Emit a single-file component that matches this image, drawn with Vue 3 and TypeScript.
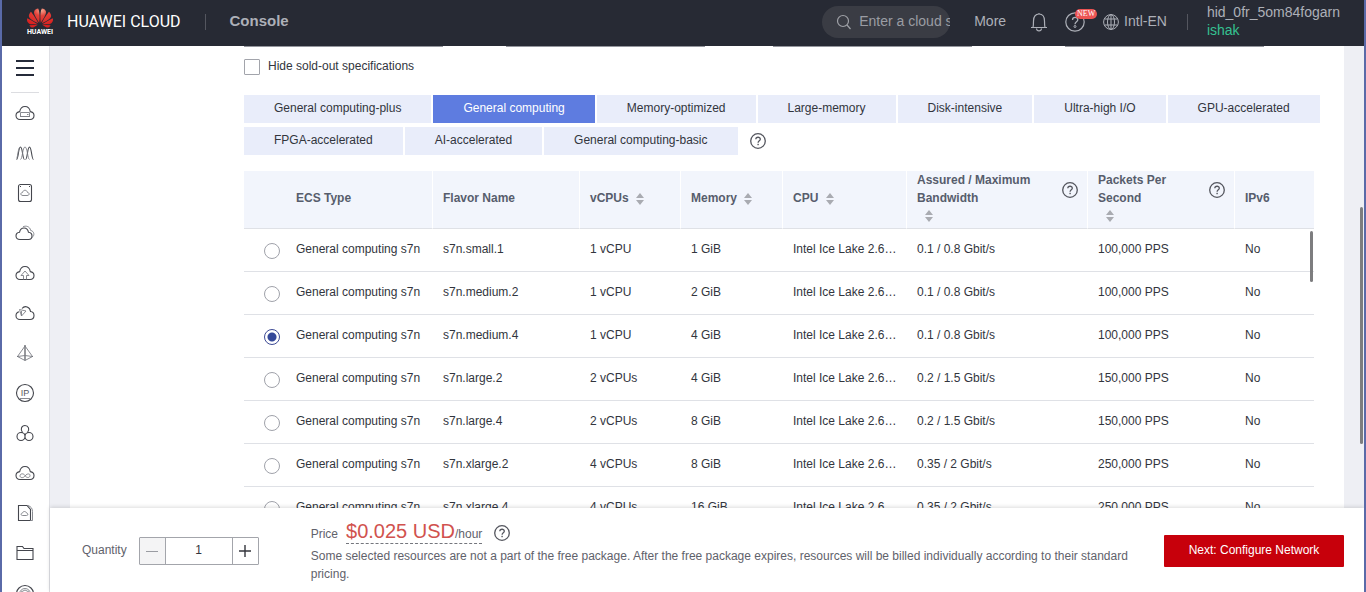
<script setup lang="ts">
import { ref } from 'vue'

interface Flavor {
  type: string
  name: string
  vcpus: string
  memory: string
  cpu: string
  bandwidth: string
  pps: string
  ipv6: string
}

interface Column {
  label: string
  width: number
  sortable?: boolean
  help?: boolean
}

const flavor = (name: string, vcpus: string, memory: string, bandwidth: string, pps: string): Flavor => ({
  type: 'General computing s7n',
  name,
  vcpus,
  memory,
  cpu: 'Intel Ice Lake 2.6GHz',
  bandwidth,
  pps,
  ipv6: 'No',
})

const tabs: string[] = [
  'General computing-plus',
  'General computing',
  'Memory-optimized',
  'Large-memory',
  'Disk-intensive',
  'Ultra-high I/O',
  'GPU-accelerated',
  'FPGA-accelerated',
  'AI-accelerated',
  'General computing-basic',
]

const columns: Column[] = [
  { label: 'ECS Type', width: 147 },
  { label: 'Flavor Name', width: 147 },
  { label: 'vCPUs', width: 101, sortable: true },
  { label: 'Memory', width: 102, sortable: true },
  { label: 'CPU', width: 124, sortable: true },
  { label: 'Assured / Maximum Bandwidth', width: 181, sortable: true, help: true },
  { label: 'Packets Per Second', width: 147, sortable: true, help: true },
  { label: 'IPv6', width: 79 },
]

const flavors: Flavor[] = [
  flavor('s7n.small.1', '1 vCPU', '1 GiB', '0.1 / 0.8 Gbit/s', '100,000 PPS'),
  flavor('s7n.medium.2', '1 vCPU', '2 GiB', '0.1 / 0.8 Gbit/s', '100,000 PPS'),
  flavor('s7n.medium.4', '1 vCPU', '4 GiB', '0.1 / 0.8 Gbit/s', '100,000 PPS'),
  flavor('s7n.large.2', '2 vCPUs', '4 GiB', '0.2 / 1.5 Gbit/s', '150,000 PPS'),
  flavor('s7n.large.4', '2 vCPUs', '8 GiB', '0.2 / 1.5 Gbit/s', '150,000 PPS'),
  flavor('s7n.xlarge.2', '4 vCPUs', '8 GiB', '0.35 / 2 Gbit/s', '250,000 PPS'),
  flavor('s7n.xlarge.4', '4 vCPUs', '16 GiB', '0.35 / 2 Gbit/s', '250,000 PPS'),
]

interface NavIcon {
  name: string
  main: string
  light?: string
  text?: string
}

const cloud =
  'M5 16.5C2.5 16.5 1 14.8 1 12.6 1 10.4 2.6 8.9 4.7 8.6 5.2 5.6 7.2 3.5 10 3.5s4.8 2.1 5.3 5.1C17.4 8.9 19 10.4 19 12.6c0 2.2-1.5 3.9-4 3.9z'

const navIcons: NavIcon[] = [
  { name: 'Elastic Cloud Server', main: cloud, light: 'M5.5 9.5h9v4h-9zM5 13.5h10M12 11.5h1.5' },
  {
    name: 'Auto Scaling',
    main: 'M1.5 16.5C3.5 16 3.3 4 5.5 4s2 12.5 4 12.5M10.5 16.5c2 0 1.8-12.5 4-12.5s2 12.5 4 12.5',
    light: 'M5.5 16.5C7.5 16 7.5 4 10 4s2.5 12 4.5 12.5M2 15C3.3 9 3.5 4.5 5 4.5',
  },
  {
    name: 'Bare Metal Server',
    main: 'M5.5 1.5h9a2 2 0 0 1 2 2v13a2 2 0 0 1-2 2h-9a2 2 0 0 1-2-2v-13a2 2 0 0 1 2-2zM5 3.5h1M14 3.5h1',
    light: 'M8 12.5c-3 0-2.6-3-.5-3 .6-3 4.4-3 5 0 2.1 0 2.5 3-.5 3z',
  },
  {
    name: 'Cloud Container',
    main: 'M5 16.5C2.5 16.5 1 15 1 13c0-2 1.5-3.5 3.5-3.7C5 6.5 6.8 5 9 5s4 1.500 4.5 4.3C15.5 9.5 17 11 17 13c0 2-1.5 3.5-3.5 3.5z',
    light: 'M8 3.8c3-1.5 7-.3 7.7 3.7 3.5.5 4.3 5 1.3 7',
  },
  { name: 'Cloud Backup', main: cloud, light: 'M10 8l-4 4.5h2.5v4M10 8l4 4.5h-2.5v4' },
  {
    name: 'Cloud Service',
    main: 'M5 16.5C2.5 16.5 1 15 1 12.7c0-2 1.3-3.5 3.2-3.9M7 5.5c3-3.5 8-1.5 8.5 3 2.2.2 3.5 2 3.5 4 0 2.5-1.5 4-4 4H5',
    light: 'M4.5 6.5L11 8l-4.5 5zM6.5 8v5',
  },
  {
    name: 'Virtual Private Cloud',
    main: 'M10 2v15.5M9.5 2.5h1M2 13.500h1M17 13.5h1',
    light: 'M10 3L2.5 13.5 10 17.5l7.5-4zM2.500 13.5L10 12.500l7.5 1',
  },
  { name: 'Elastic IP', main: 'M10 1.5a8.5 8.5 0 1 0 0 17a8.5 8.5 0 1 0 0-17z', light: 'M5 15.5h10', text: 'IP' },
  {
    name: 'Elastic Load Balance',
    main: 'M6 9.5a4 4 0 1 0 0 8a4 4 0 1 0 0-8zM14 9.5a4 4 0 1 0 0 8a4 4 0 1 0 0-8zM7.5 9.5c-2.5-3-1-7 2.5-7s5 4 2.5 7M10 10.5V13',
  },
  {
    name: 'Cloud Connect',
    main: cloud,
    light: 'M10 12.500c-1.500-2.500-5-2-5 .3s3.500 2.500 5 .2 5-3 5-.5-3.500 2.700-5 .2',
  },
  {
    name: 'Object Storage',
    main: 'M3.5 2.5H12l3.5 4v11h-12z',
    light: 'M13 2.5c3 1 4.5 3 4.5 6v9H15M7.5 12.500c-2 0-1.7-2.5 0-2.5.5-2 3.500-2 4 0 1.700 0 2 2.500 0 2.500z',
  },
  { name: 'File Service', main: 'M2 16.5v-13h5.500l1.500 2h9v11zM2 7.500h16' },
  {
    name: 'Content Delivery',
    main: 'M10 2.5a8.5 8.5 0 1 0 0 17a8.5 8.5 0 1 0 0-17z',
    light: 'M10 5.5a5.5 5.5 0 1 0 0 11a5.5 5.5 0 1 0 0-11zM6 9l4-2 4 2',
  },
]

const activeTab = ref('General computing')
const selected = ref('s7n.medium.4')
const hideSoldOut = ref(false)
const quantity = ref(1)
</script>

<template>
  <div class="console">
    <svg class="defs" aria-hidden="true">
      <symbol id="help" viewBox="0 0 16 16">
        <circle cx="8" cy="8" r="7.3" fill="none" stroke="currentColor" stroke-width="1.3" />
        <path d="M5.8 6.3C5.900 3.5 10.300 3.600 10.300 6.200 10.300 7.800 8.100 7.800 8.100 9.700" fill="none" stroke="currentColor" stroke-width="1.300" />
        <rect x="7.4" y="10.8" width="1.4" height="1.4" fill="currentColor" />
      </symbol>
      <symbol id="help-thin" viewBox="0 0 20 20">
        <circle cx="10" cy="10" r="9.200" fill="none" stroke="currentColor" stroke-width="1.200" />
        <path d="M7.500 8C7.500 4.500 12.800 4.600 12.800 7.800 12.800 9.800 10 9.800 10 12.200" fill="none" stroke="currentColor" stroke-width="1.300" />
        <circle cx="10" cy="14.500" r="1" fill="none" stroke="currentColor" stroke-width="1" />
      </symbol>
      <symbol id="sort" viewBox="0 0 8 12">
        <path d="M4 0l4 5H0zM4 12l4-5H0z" fill="currentColor" />
      </symbol>
    </svg>

    <header class="topbar">
      <a class="brand" href="#">
        <span class="logo">
          <svg width="26" height="20" viewBox="0 2.5 24 19" preserveAspectRatio="none" aria-hidden="true">
            <defs>
              <radialGradient id="petal" cx="0.55" cy="0.1" r="0.8">
                <stop offset="0" stop-color="#f4a890" />
                <stop offset="0.35" stop-color="#e4423a" />
                <stop offset="1" stop-color="#d8201f" />
              </radialGradient>
            </defs>
            <path
              fill="url(#petal)"
              d="M3.670 6.140S1.820 7.910 1.720 9.780v.350c.080 1.510 1.220 2.400 1.220 2.400 1.830 1.790 6.260 4.040 7.300 4.550 0 0 .060.030.100-.010l.020-.040v-.040C7.520 10.800 3.670 6.140 3.670 6.140zM9.650 18.600c-.020-.080-.100-.080-.100-.080l-7.380.260c.800 1.430 2.150 2.530 3.560 2.200.960-.250 3.160-1.780 3.880-2.300.060-.050.040-.090.040-.090zm.080-.780C6.490 15.630.210 12.280.210 12.280c-.150.460-.200.900-.210 1.300v.070c0 1.070.400 1.820.400 1.820.800 1.690 2.340 2.200 2.340 2.200.700.300 1.400.310 1.400.310.120.020 4.400 0 5.540 0 .050 0 .080-.050.080-.050v-.060c0-.030-.030-.050-.030-.050zM9.060 3.190a3.420 3.420 0 0 0-2.570 3.150v.410c.030.600.160 1.050.160 1.050.660 2.900 3.860 7.650 4.550 8.650.050.050.100.030.100.030a.1.1 0 0 0 .060-.100c1.060-10.600-1.110-13.420-1.110-13.420-.320.020-1.190.230-1.190.230zm8.300 2.270s-.490-1.800-2.440-2.280c0 0-.570-.140-1.170-.220 0 0-2.180 2.810-1.120 13.430.010.070.060.080.060.080.070.030.100-.030.100-.030.720-1.030 3.900-5.760 4.550-8.640 0 0 .360-1.400.020-2.340zm-2.920 13.070s-.070 0-.090.050c0 0-.010.070.030.100.700.510 2.850 2 3.880 2.300 0 0 .160.050.430.060h.140c.690-.020 1.900-.370 3-2.260l-7.400-.250zm7.830-8.410c.140-2.060-1.940-3.970-1.940-3.980 0 0-3.850 4.660-6.670 10.800 0 0-.030.080.020.130l.040.010h.060c1.060-.530 5.460-2.770 7.280-4.540 0 0 1.150-.930 1.210-2.420zm1.520 2.140s-6.280 3.370-9.520 5.550c0 0-.050.040-.030.110 0 0 .030.060.070.060 1.160 0 5.560 0 5.670-.020 0 0 .570-.020 1.270-.290 0 0 1.560-.500 2.370-2.270 0 0 .730-1.450.170-3.140z"
            />
          </svg>
          <span class="logo-name">HUAWEI</span>
        </span>
        <span class="brand-name">HUAWEI CLOUD</span>
      </a>
      <span class="divider"></span>
      <a class="console-link" href="#">Console</a>

      <label class="search">
        <svg width="16" height="16" viewBox="0 0 16 16" fill="none" stroke="#a0a2a8" stroke-width="1.2" aria-hidden="true">
          <circle cx="7" cy="7" r="5.5" />
          <path d="M11 11l3.500 4" />
        </svg>
        <input type="text" placeholder="Enter a cloud service or function" aria-label="Search" />
      </label>
      <a class="top-link more" href="#">More</a>
      <button class="top-icon bell" type="button" aria-label="Notifications">
        <svg width="18" height="20" viewBox="0 0 18 20" fill="none" stroke="currentColor" stroke-width="1.2">
          <path d="M1 15.5h16M3 15.5c.3-1.5.5-3 .5-6.5 0-4 2-7 5.5-7s5.500 3 5.500 7c0 3.500.2 5 .5 6.500M6.500 16.500c.3 3.300 4.700 3.300 5 0M9 1v1" />
        </svg>
      </button>
      <button class="top-icon support" type="button" aria-label="Support">
        <svg width="20" height="20"><use href="#help-thin" /></svg>
        <span class="badge">NEW</span>
      </button>
      <a class="locale" href="#">
        <svg width="16" height="16" viewBox="0 0 16 16" fill="none" stroke="currentColor" aria-hidden="true">
          <circle cx="8" cy="8" r="7.4" />
          <ellipse cx="8" cy="8" rx="3.5" ry="7.4" />
          <path d="M8 .5v15M1.500 5h13M1.500 11h13" />
        </svg>
        <span class="top-link">Intl-EN</span>
      </a>
      <span class="divider account-divider"></span>
      <a class="account" href="#">
        <span>hid_0fr_5om84fogarn</span>
        <span class="user">ishak</span>
      </a>
    </header>

    <div class="workspace">
      <nav class="sidebar" aria-label="Services">
        <button class="menu" type="button" aria-label="Menu">
          <svg width="18" height="16" viewBox="0 0 18 16" fill="#252b3a"><path d="M0 0h18v2H0zM0 7h18v2H0zM0 14h18v2H0z" /></svg>
        </button>
        <a v-for="icon in navIcons" :key="icon.name" class="nav-item" href="#" :aria-label="icon.name">
          <svg width="20" height="20" viewBox="0 0 20 20" fill="none" stroke="#44464d">
            <path :d="icon.main" stroke-width="1.1" />
            <path v-if="icon.light" :d="icon.light" stroke="#7c7e84" stroke-width="0.9" />
            <text v-if="icon.text" class="icon-text" x="10" y="13" text-anchor="middle">{{ icon.text }}</text>
          </svg>
        </a>
      </nav>

      <div class="page">
        <main class="content">
          <section class="card">
            <div class="filter-edges"><i></i><i></i><i></i><i></i></div>
            <label class="hide-option">
              <input v-model="hideSoldOut" type="checkbox" />
              Hide sold-out specifications
            </label>

            <div class="tabs">
              <button
                v-for="tab in tabs"
                :key="tab"
                type="button"
                class="tab"
                :class="{ active: tab === activeTab }"
                @click="activeTab = tab"
              >
                {{ tab }}
              </button>
              <button class="help tabs-help" type="button" aria-label="About ECS types">
                <svg width="16" height="16"><use href="#help" /></svg>
              </button>
            </div>

            <div class="table-wrap">
              <table>
                <colgroup>
                  <col class="pick-col" />
                  <col v-for="col in columns" :key="col.label" :style="{ width: col.width + 'px' }" />
                </colgroup>
                <thead>
                  <tr>
                    <th class="pick"></th>
                    <th v-for="col in columns" :key="col.label">
                      <div class="head">
                        <span class="head-text">
                          {{ col.label }}
                          <button
                            v-if="col.sortable"
                            type="button"
                            class="sort"
                            :class="{ below: col.help }"
                            :aria-label="'Sort by ' + col.label"
                          >
                            <svg width="8" height="12"><use href="#sort" /></svg>
                          </button>
                        </span>
                        <button v-if="col.help" class="help" type="button" :aria-label="'About ' + col.label">
                          <svg width="16" height="16"><use href="#help" /></svg>
                        </button>
                      </div>
                    </th>
                  </tr>
                </thead>
                <tbody>
                  <tr v-for="row in flavors" :key="row.name">
                    <td class="pick">
                      <input v-model="selected" type="radio" name="flavor" :value="row.name" :aria-label="row.name" />
                    </td>
                    <td>{{ row.type }}</td>
                    <td>{{ row.name }}</td>
                    <td>{{ row.vcpus }}</td>
                    <td>{{ row.memory }}</td>
                    <td>{{ row.cpu }}</td>
                    <td>{{ row.bandwidth }}</td>
                    <td>{{ row.pps }}</td>
                    <td>{{ row.ipv6 }}</td>
                  </tr>
                </tbody>
              </table>
              <span class="table-scroll"></span>
            </div>
          </section>
        </main>

        <footer class="order">
          <label class="qty-label" for="quantity">Quantity</label>
          <div class="stepper">
            <button type="button" aria-label="Decrease" :disabled="quantity <= 1" @click="quantity--">
              <svg width="12" height="12" viewBox="0 0 12 12" stroke="currentColor"><path d="M0 6.5h12" /></svg>
            </button>
            <input id="quantity" v-model.number="quantity" type="text" inputmode="numeric" />
            <button type="button" aria-label="Increase" @click="quantity++">
              <svg width="12" height="12" viewBox="0 0 12 12" stroke="currentColor" stroke-width="1.4"><path d="M0 6h12M6 0v12" /></svg>
            </button>
          </div>
          <div class="summary">
            <div class="price-line">
              <span class="price-label">Price</span>
              <span class="price"><strong>$0.025 USD</strong>/hour</span>
              <button class="help" type="button" aria-label="Price details">
                <svg width="16" height="16"><use href="#help" /></svg>
              </button>
            </div>
            <p>
              Some selected resources are not a part of the free package. After the free package expires, resources will
              be billed individually according to their standard pricing.
            </p>
          </div>
          <button class="next" type="button">Next: Configure Network</button>
        </footer>
      </div>
    </div>
    <span class="page-scroll"></span>
  </div>
</template>

<style>
body {
  margin: 0;
}
</style>

<style scoped>
* {
  box-sizing: border-box;
}
.console {
  position: relative;
  display: flex;
  flex-direction: column;
  height: 100vh;
  overflow: hidden;
  border: solid #5a6aa8;
  border-width: 0 2px;
  background: #eeeff4;
  color: #32353d;
  font: 12px/18px 'Liberation Sans', Arial, sans-serif;
}
.defs {
  position: absolute;
  width: 0;
  height: 0;
}
svg {
  display: block;
  flex: none;
}
button,
input {
  font: inherit;
  color: inherit;
}
button {
  padding: 0;
  border: 0;
  background: none;
}
a {
  color: inherit;
  text-decoration: none;
}

.topbar {
  display: flex;
  flex: none;
  align-items: center;
  height: 46px;
  padding: 0 24px 2px;
  background: #272a34;
  color: #adb0b8;
  font-size: 14px;
}
.brand {
  display: flex;
  align-items: center;
  gap: 13px;
  color: #fff;
}
.logo {
  display: flex;
  flex-direction: column;
  align-items: center;
  width: 28px;
}
.logo-name {
  font: bold 7px/8px Roboto, sans-serif;
}
.brand-name {
  font: 16px/20px Roboto, sans-serif;
}
.divider {
  width: 1px;
  height: 16px;
  margin-left: 24px;
  background: #54565f;
}
.console-link {
  margin-left: 24px;
  padding-bottom: 2px;
  font-size: 15px;
  font-weight: bold;
}
.search {
  display: flex;
  align-items: center;
  gap: 7px;
  width: 128px;
  height: 32px;
  margin-left: auto;
  padding-left: 14px;
  border-radius: 16px;
  background: #3a3c44;
}
.search input {
  flex: 1;
  min-width: 0;
  height: 24px;
  padding: 0 0 2px;
  border: 0;
  outline: 0;
  background: none;
}
.search input::placeholder {
  color: #9a9ca3;
  opacity: 1;
}
.top-link {
  padding-bottom: 2px;
}
.more {
  margin-left: 24px;
}
.top-icon {
  position: relative;
}
.bell {
  margin-left: 24px;
}
.support {
  margin-left: 17px;
}
.badge {
  position: absolute;
  top: -3px;
  left: 10px;
  width: 22px;
  border-radius: 5px;
  background: #ec5453;
  color: #fff;
  font: 8px/10px 'Liberation Serif', serif;
  text-align: center;
}
.locale {
  display: flex;
  align-items: center;
  gap: 5px;
  margin-left: 18px;
}
.account-divider {
  margin-left: 20px;
}
.account {
  display: flex;
  flex-direction: column;
  margin-left: 19px;
  padding-bottom: 2px;
}
.user {
  color: #35c191;
}

.workspace {
  display: flex;
  flex: 1;
  min-height: 0;
}
.sidebar {
  flex: none;
  display: flex;
  flex-direction: column;
  align-items: center;
  width: 48px;
  padding-right: 1px;
  overflow: hidden;
  border-right: 1px solid #dfe0e5;
  background: #fff;
}
.menu {
  flex: none;
  display: flex;
  align-items: center;
  justify-content: center;
  width: 28px;
  height: 47px;
  padding-bottom: 2px;
  border-bottom: 1px solid #dcdde1;
}
.nav-item {
  flex: none;
  display: flex;
  align-items: center;
  height: 40px;
}
.icon-text {
  fill: #55575e;
  stroke: none;
  font-size: 9px;
}
.page {
  flex: 1;
  display: flex;
  flex-direction: column;
  min-width: 0;
}
.content {
  flex: 1;
  min-height: 0;
  overflow: hidden;
  padding: 0 20px;
}
.card {
  padding: 0 30px 40px 174px;
  background: #fff;
}
.filter-edges {
  display: grid;
  grid-template-columns: 262fr 267fr 292fr 249fr;
  height: 1px;
}
.filter-edges i {
  width: 199px;
  background: #94969d;
}
.hide-option {
  display: flex;
  width: max-content;
  gap: 8px;
  margin-top: 10px;
}
.hide-option input {
  appearance: none;
  width: 16px;
  height: 16px;
  margin: 2px 0 0;
  border: 1px solid #a2a4ab;
  border-radius: 1px;
}
.tabs {
  display: flex;
  flex-wrap: wrap;
  align-items: center;
  gap: 4px 2px;
  margin: 20px -10px 0 0;
}
.tab {
  height: 28px;
  padding: 0 30px 2px;
  background: #e9edfa;
}
.tab.active {
  background: #5e7ce0;
  color: #fff;
}
.help {
  color: #54565e;
}
.tabs-help {
  margin-left: 10px;
}

.table-wrap {
  position: relative;
  margin-top: 16px;
}
table {
  width: 100%;
  table-layout: fixed;
  border-spacing: 0;
}
.pick-col {
  width: 42px;
}
th,
td {
  overflow: hidden;
  border-bottom: 1px solid #dfe1e6;
  text-align: left;
  text-overflow: ellipsis;
  white-space: nowrap;
}
th {
  height: 58px;
  padding: 0 9px 3px 10px;
  border-right: 1px solid #fff;
  background: #f2f5fc;
  color: #575d6c;
  white-space: normal;
}
th.pick,
th:last-child {
  border-right: 0;
}
td {
  height: 43px;
  padding: 0 10px 2px;
}
td.pick {
  padding: 2px 0 0 20px;
}
td input {
  display: block;
  appearance: none;
  width: 16px;
  height: 16px;
  margin: 0;
  border: 1px solid #a0a2aa;
  border-radius: 50%;
}
td input:checked {
  border-color: #3d4a94;
  background: radial-gradient(circle, #344899 4px, #fff 5px);
}
.head {
  display: flex;
  justify-content: space-between;
}
.head .help {
  align-self: flex-start;
  margin-top: 11px;
}
.head-text {
  flex: 0 1 120px;
}
.sort {
  display: inline-block;
  margin-left: 4px;
  vertical-align: middle;
  color: #a9abb1;
}
.sort.below {
  display: block;
  height: 18px;
  margin-left: 8px;
}
.table-scroll {
  position: absolute;
  top: 60px;
  right: 1px;
  width: 3px;
  height: 51px;
  border-radius: 2px;
  background: #7d7d7f;
}
.page-scroll {
  position: absolute;
  top: 35%;
  right: 1px;
  width: 3px;
  height: 40%;
  border-radius: 2px;
  background: #7d7d7f;
}

.order {
  position: relative;
  flex: none;
  display: flex;
  align-items: center;
  min-height: 84px;
  padding: 0 20px 0 32px;
  background: #fff;
  box-shadow: 0 -1px 4px rgba(0, 0, 0, 0.14);
  color: #5f626b;
}
.stepper {
  display: flex;
  width: 120px;
  height: 28px;
  margin: 2px 52px 0 12px;
  border: 1px solid #a3a5ab;
  border-radius: 1px;
}
.stepper button {
  display: flex;
  align-items: center;
  justify-content: center;
  width: 25px;
  color: #34363d;
}
.stepper button:disabled {
  background: #f4f4f5;
  color: #9a9ca2;
}
.stepper input {
  flex: 1;
  min-width: 0;
  padding: 0 0 2px;
  border: solid #a3a5ab;
  border-width: 0 1px;
  outline: 0;
  background: none;
  color: #32353d;
  text-align: center;
}
.summary {
  flex: 1;
  min-width: 0;
  padding-top: 2px;
}
.summary p {
  margin: 1px 0 0;
}
.price-line {
  display: flex;
  align-items: center;
  height: 26px;
}
.price-label {
  padding-top: 2px;
}
.price {
  margin: 0 12px 0 8px;
  border-bottom: 1px dashed #74767d;
}
.price strong {
  color: #d1524e;
  font-size: 20px;
  font-weight: normal;
}
.next {
  width: 180px;
  height: 32px;
  margin: 2px 0 0 20px;
  padding-bottom: 2px;
  border-radius: 1px;
  background: #c7000b;
  color: #fff;
}
</style>
